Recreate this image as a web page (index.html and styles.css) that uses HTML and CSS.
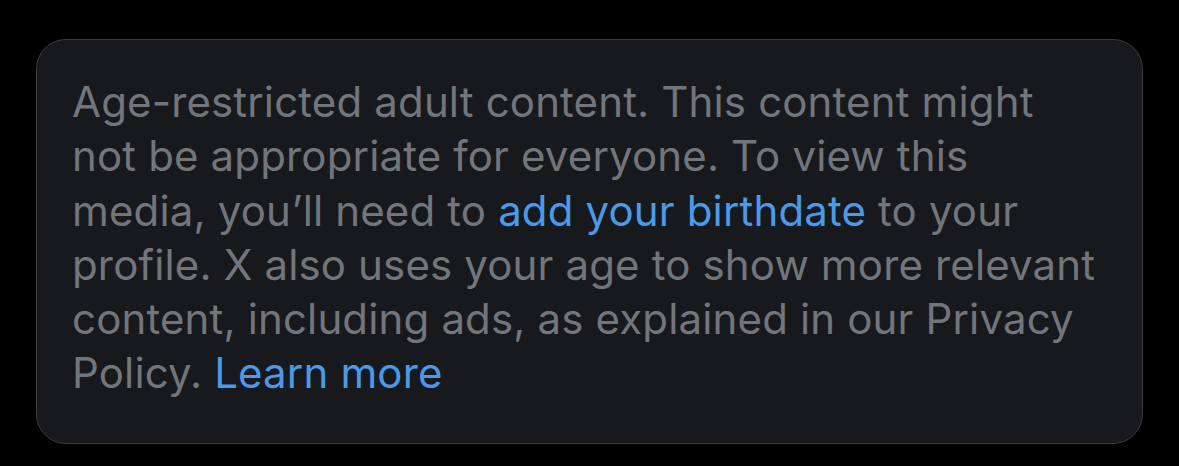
FILE: index.html
```html
<!DOCTYPE html>
<html>
<head>
<meta charset="utf-8">
<link rel="stylesheet" href="styles.css">
</head>
<body>
<div class="page">
  <div class="card">
    <p class="notice">Age-restricted adult content. This content might<br>not be appropriate for everyone. To view this<br>media, you’ll need to <a class="link" href="#">add your birthdate</a> to your<br>profile. X also uses your age to show more relevant<br>content, including ads, as explained in our Privacy<br>Policy. <a class="link" href="#">Learn more</a></p>
  </div>
</div>
</body>
</html>
```

FILE: styles.css
```css
html, body {
  margin: 0;
  padding: 0;
  background: #000;
}
.page {
  width: 1179px;
  height: 466px;
  padding: 39px 36px 22px 36px;
  box-sizing: border-box;
}
.card {
  height: 405px;
  box-sizing: border-box;
  background: #18191c;
  border: 1px solid #3b3c3f;
  border-radius: 30px;
  padding: 35px 35px 0 35px;
}
.notice {
  margin: 0;
  font-family: Inter, "Noto Sans", sans-serif;
  font-size: 42px;
  letter-spacing: 0.15px;
  line-height: 54.3px;
  color: #72767b;
  white-space: nowrap;
}
.link {
  color: #4a9ae9;
  text-decoration: none;
}
```
